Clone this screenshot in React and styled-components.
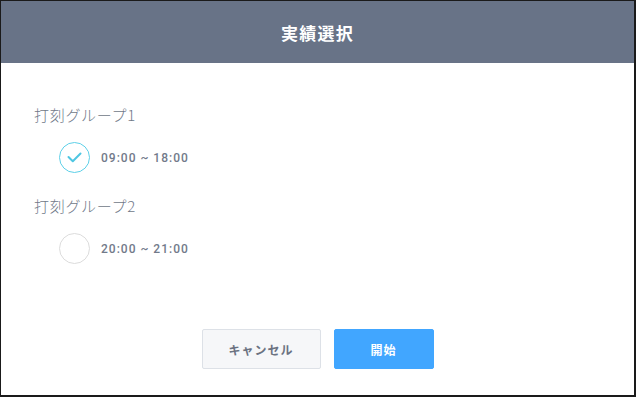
import React, { useState } from "react";
import styled, { createGlobalStyle } from "styled-components";

const Global = createGlobalStyle`
  html, body { margin: 0; padding: 0; background: #fff; }
  * { box-sizing: border-box; }
  body { font-family: Roboto, "Noto Sans CJK JP", sans-serif; }
`;

const Frame = styled.div`
  width: 636px;
  height: 397px;
  display: flex;
  flex-direction: column;
  border-style: solid;
  border-color: #1a1a1a;
  border-width: 1px 2px 2px 1px;
  background: #fff;
`;

const Header = styled.header`
  height: 62px;
  flex: none;
  background: #687387;
  display: flex;
  align-items: center;
  justify-content: center;
`;

const Title = styled.h1`
  margin: 0;
  color: #fff;
  font-size: 17px;
  font-weight: 700;
  letter-spacing: 1.2px;
  font-family: "Noto Sans CJK JP", sans-serif;
`;

const Body = styled.main`
  flex: 1;
  padding: 42px 33px 0;
  display: flex;
  flex-direction: column;
`;

const GroupLabel = styled.div`
  font-family: "Noto Sans CJK JP", sans-serif;
  font-size: 15px;
  font-weight: 300;
  line-height: 20px;
  color: #707888;
  letter-spacing: 0.7px;
  margin-top: ${(p) => (p.$first ? "0" : "23px")};
`;

const Option = styled.label`
  display: flex;
  align-items: center;
  gap: 11px;
  margin: 17px 0 0 25px;
  height: 31px;
  cursor: pointer;
`;

const Radio = styled.span`
  width: 31px;
  height: 31px;
  border-radius: 50%;
  border: 1px solid ${(p) => (p.$checked ? "#5dd0e8" : "#dcdcdc")};
  display: flex;
  align-items: center;
  justify-content: center;
  flex: none;
`;

const Time = styled.span`
  font-family: Roboto, sans-serif;
  font-size: 12px;
  font-weight: 500;
  letter-spacing: 1px;
  color: #727a8a;
`;

const Footer = styled.footer`
  display: flex;
  justify-content: center;
  gap: 13px;
  padding-bottom: 26px;
`;

const Button = styled.button`
  height: 40px;
  width: ${(p) => (p.$primary ? "100px" : "119px")};
  border-radius: 2px;
  border: 1px solid ${(p) => (p.$primary ? "#41a6ff" : "#dde1e7")};
  background: ${(p) => (p.$primary ? "#41a6ff" : "#f6f7f9")};
  color: ${(p) => (p.$primary ? "#fff" : "#6b7281")};
  font-family: "Noto Sans CJK JP", sans-serif;
  font-size: 12px;
  font-weight: 700;
  letter-spacing: 1px;
  cursor: pointer;
`;

const Check = () => (
  <svg width="15" height="11" viewBox="0 0 15 11" fill="none">
    <path d="M1.5 5 L5.8 9.3 L13.5 1.5" stroke="#4fc6e2" strokeWidth="2" strokeLinecap="round" strokeLinejoin="round" />
  </svg>
);

const groups = [
  { name: "打刻グループ1", time: "09:00 ~ 18:00" },
  { name: "打刻グループ2", time: "20:00 ~ 21:00" },
];

export default function App() {
  const [sel, setSel] = useState(0);
  return (
    <>
      <Global />
      <Frame>
        <Header>
          <Title>実績選択</Title>
        </Header>
        <Body>
          {groups.map((g, i) => (
            <React.Fragment key={g.name}>
              <GroupLabel $first={i === 0}>{g.name}</GroupLabel>
              <Option onClick={() => setSel(i)}>
                <Radio $checked={sel === i}>{sel === i && <Check />}</Radio>
                <Time>{g.time}</Time>
              </Option>
            </React.Fragment>
          ))}
        </Body>
        <Footer>
          <Button>キャンセル</Button>
          <Button $primary>開始</Button>
        </Footer>
      </Frame>
    </>
  );
}
